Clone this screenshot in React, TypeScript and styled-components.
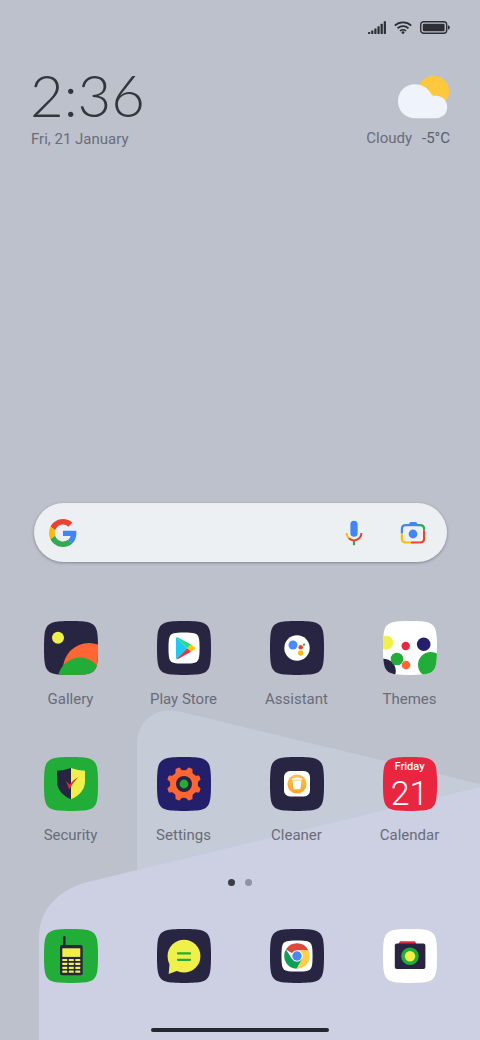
import React, { ReactNode } from "react";
import styled, { createGlobalStyle } from "styled-components";

const GlobalStyle = createGlobalStyle`
  * { box-sizing: border-box; }
  body {
    margin: 0;
    background: #bdc1cc;
    font-family: Roboto, "Liberation Sans", sans-serif;
  }
`;

const Screen = styled.main`
  position: relative;
  display: flex;
  flex-direction: column;
  min-height: 100vh;
  overflow: hidden;
  color: #696c78;
`;

const Wallpaper = styled.svg`
  position: absolute;
  inset: 0;
  z-index: -1;
  width: 100%;
  height: 100%;
`;

const StatusBar = styled.div`
  display: flex;
  justify-content: flex-end;
  align-items: center;
  gap: 8px;
  padding: 21px 30px 0;
`;

const Header = styled.header`
  display: flex;
  justify-content: space-between;
  padding: 36px 30px 0 31px;
`;

const ClockBlock = styled.div`
  display: flex;
  flex-direction: column;
  gap: 10px;
`;

const Clock = styled.time`
  margin-left: -1px;
  font: 300 58px/49px Lato, sans-serif;
  color: #33363c;
`;

const Caption = styled.span<{ $dark?: boolean }>`
  font-size: 15px;
  line-height: 20px;
  white-space: nowrap;
  color: ${(p) => (p.$dark ? "#5a5d69" : "inherit")};
`;

const Weather = styled.div`
  display: flex;
  flex-direction: column;
  align-items: flex-end;
  gap: 9px;
  padding-top: 6px;
`;

const WeatherText = styled.div`
  display: flex;
  align-items: baseline;
  gap: 10px;
`;

const Spacer = styled.div`
  flex: 1;
  min-height: 40px;
`;

const SearchBar = styled.form`
  display: flex;
  align-items: center;
  height: 59px;
  margin: 0 33px 59px 34px;
  padding: 0 21px 0 15px;
  border-radius: 30px;
  background: #edf0f2;
  box-shadow: 0 1px 3px rgba(70, 74, 90, 0.5);
`;

const SearchInput = styled.input`
  flex: 1;
  min-width: 0;
  height: 40px;
  margin: 0 12px;
  border: 0;
  outline: 0;
  background: transparent;
  font: 16px Roboto, sans-serif;
`;

const IconButton = styled.button`
  display: flex;
  padding: 0;
  border: 0;
  background: none;
  cursor: pointer;
`;

const SearchActions = styled.div`
  display: flex;
  align-items: center;
  gap: 37px;
`;

const AppGrid = styled.div`
  display: grid;
  grid-template-columns: repeat(4, 1fr);
  row-gap: 48px;
  padding: 0 14px;
`;

const AppButton = styled.button`
  display: flex;
  flex-direction: column;
  align-items: center;
  gap: 14px;
  padding: 0;
  border: 0;
  background: none;
  font-family: inherit;
  color: inherit;
  cursor: pointer;
`;

const Tile = styled.span`
  display: grid;
  width: 54px;
  height: 54px;
  > * { grid-area: 1 / 1; }
`;

const CalendarFace = styled.span`
  display: flex;
  flex-direction: column;
  align-items: center;
  padding-top: 3px;
  color: #fff;
`;

const Weekday = styled.span`
  font-size: 11px;
  font-weight: 500;
  line-height: 13px;
`;

const MonthDay = styled.span`
  font-size: 34px;
  font-weight: 300;
  line-height: 40px;
`;

const Pager = styled.nav`
  display: flex;
  justify-content: center;
  gap: 10px;
  margin: 34px 0 43px;
`;

const PageDot = styled.button<{ $active?: boolean }>`
  width: 7px;
  height: 7px;
  padding: 0;
  border: 0;
  border-radius: 50%;
  background: ${(p) => (p.$active ? "#3b3c46" : "#8f92a4")};
`;

const HomeIndicator = styled.div`
  width: 37%;
  height: 4px;
  margin: 45px auto 8px;
  border-radius: 2px;
  background: #25272f;
`;

const SQUIRCLE =
  "M27 0C36 0 41 .3 45 1.4C49.3 2.7 51.4 5 52.6 9C53.7 13 54 18 54 27C54 36 53.7 41 52.6 45C51.4 49 49.3 51.3 45 52.6C41 53.7 36 54 27 54C18 54 13 53.7 9 52.6C4.7 51.3 2.6 49 1.4 45C.3 41 0 36 0 27C0 18 .3 13 1.4 9C2.6 5 4.7 2.7 9 1.4C13 .3 18 0 27 0Z";

const INK = "#282542";
const GREEN = "#22ac38";
const YELLOW = "#f0f04a";
const ORANGE = "#ff6634";
const NAVY = "#241f6b";
const RED = "#e8263f";

function AppIcon({ id, fill, children }: { id: string; fill: string; children?: ReactNode }) {
  return (
    <svg width="54" height="54" viewBox="0 0 54 54" aria-hidden="true">
      <clipPath id={id}>
        <path d={SQUIRCLE} />
      </clipPath>
      <path d={SQUIRCLE} fill={fill} />
      <g clipPath={`url(#${id})`}>{children}</g>
    </svg>
  );
}

const Plate = () => (
  <path d={SQUIRCLE} fill="#fff" transform="translate(11.5 11.5) scale(.575)" />
);

const Gallery = () => (
  <AppIcon id="gallery" fill={INK}>
    <circle cx="14" cy="16.7" r="6" fill={YELLOW} />
    <circle cx="45" cy="48" r="26" fill={ORANGE} />
    <circle cx="36" cy="58.5" r="22" fill={GREEN} />
  </AppIcon>
);

const PlayStore = () => (
  <AppIcon id="play" fill={INK}>
    <Plate />
    <path d="M19.6 16.3Q19 16.6 19 17.5V36.8Q19 37.8 19.6 38L30.2 27.2Z" fill="#1fc8f5" />
    <path d="M19.6 16.3Q20 15.9 21 16.4L34 23.6L30.2 27.2Z" fill="#21dd84" />
    <path d="M34 23.6L37.6 25.9Q39 27 37.6 28.2L34 30.7L30.2 27.2Z" fill="#fdc50b" />
    <path d="M19.6 38Q20 38.4 21 37.9L34 30.7L30.2 27.2Z" fill="#e8334a" />
  </AppIcon>
);

const Assistant = () => (
  <AppIcon id="assistant" fill={INK}>
    <circle cx="27" cy="27" r="12.7" fill="#fff" />
    <circle cx="23" cy="24" r="4.5" fill="#4a8cf6" />
    <circle cx="30.7" cy="26.3" r="2.3" fill="#ea4335" />
    <circle cx="30.7" cy="32" r="2.7" fill="#fbb90c" />
    <circle cx="34" cy="23.6" r="1.2" fill="#34a853" />
  </AppIcon>
);

const Themes = () => (
  <AppIcon id="themes" fill="#fff">
    <circle cx="3.3" cy="21.7" r="7" fill={YELLOW} />
    <circle cx="22.7" cy="25" r="4.2" fill={RED} />
    <circle cx="40.7" cy="23.2" r="6.8" fill={NAVY} />
    <circle cx=".5" cy="50" r="12.3" fill={INK} />
    <circle cx="14" cy="38" r="6.3" fill={GREEN} />
    <circle cx="23" cy="44" r="4.3" fill={ORANGE} />
    <circle cx="47.8" cy="43.8" r="12.8" fill={GREEN} />
  </AppIcon>
);

const Security = () => (
  <AppIcon id="security" fill={GREEN}>
    <path d="M27 11Q20 13.5 13 13.8V24Q13 36 27 42.3Z" fill={INK} />
    <path d="M27 11Q34 13.5 41 13.8V24Q41 36 27 42.3Z" fill={YELLOW} />
    <path d="M21.8 23.5L25.4 27.6Q29 22.8 34.5 20Q28.6 25.5 25.3 32.6Z" fill={RED} />
  </AppIcon>
);

const TEETH = [22.5, 67.5, 112.5, 157.5, 202.5, 247.5, 292.5, 337.5];

const Settings = () => (
  <AppIcon id="settings" fill={NAVY}>
    <circle cx="27" cy="27" r="13.8" fill={ORANGE} />
    {TEETH.map((angle) => (
      <path
        key={angle}
        d="M20.8 15.5Q24.3 13.6 24.5 10.9Q24.6 9.8 25.6 9.8H28.4Q29.4 9.8 29.5 10.9Q29.7 13.6 33.2 15.5Z"
        fill={ORANGE}
        transform={`rotate(${angle} 27 27)`}
      />
    ))}
    <circle cx="27" cy="27" r="8" fill={INK} />
    <circle cx="27" cy="27" r="4.4" fill={GREEN} />
  </AppIcon>
);

const Cleaner = () => (
  <AppIcon id="cleaner" fill={INK}>
    <linearGradient id="amber" x1="0" y1="0" x2="0" y2="1">
      <stop offset="0" stopColor="#fbc052" />
      <stop offset="1" stopColor="#fba32f" />
    </linearGradient>
    <rect x="14" y="14" width="26" height="25.6" rx="6" fill="#fff" />
    <circle cx="27" cy="27" r="9.6" fill="url(#amber)" />
    <path d="M21.8 22Q22 21.3 24.4 21.2L25 20.6H29L29.6 21.2Q32 21.3 32.2 22V22.8H21.8Z" fill="#fff" />
    <path d="M22.6 23.6H31.4L30.6 31.2Q30.5 32.3 29.5 32.3H24.5Q23.5 32.3 23.4 31.2Z" fill="#fff" />
  </AppIcon>
);

const Calendar = () => (
  <>
    <AppIcon id="calendar" fill={RED} />
    <CalendarFace>
      <Weekday>Friday</Weekday>
      <MonthDay>21</MonthDay>
    </CalendarFace>
  </>
);

const Phone = () => (
  <AppIcon id="phone" fill={GREEN}>
    <rect x="19" y="7" width="2.6" height="14" rx="1.3" fill={INK} />
    <rect x="16" y="16" width="22.7" height="30.2" rx="2" fill={INK} />
    <rect x="18.3" y="19.3" width="18" height="8.6" fill={YELLOW} />
    {[29.9, 33.8, 37.7, 41.6].map((y) =>
      [18.3, 24.8, 31.3].map((x) => (
        <rect key={`${x}-${y}`} x={x} y={y} width="5" height="2.2" rx=".4" fill={YELLOW} />
      ))
    )}
  </AppIcon>
);

const Messages = () => (
  <AppIcon id="messages" fill={INK}>
    <circle cx="27" cy="27.2" r="16.4" fill={YELLOW} />
    <path d="M12.6 34L11.7 45L21 41.5Z" fill={YELLOW} />
    <path d="M21 24.4H33M21 30.8H33" stroke={GREEN} strokeWidth="2.2" strokeLinecap="round" />
  </AppIcon>
);

const Chrome = () => (
  <AppIcon id="chrome" fill={INK}>
    <Plate />
    <path d="M27 27L15.9 20.6A12.8 12.8 0 0 1 38.4 21.2H27Z" fill="#dc4a3d" />
    <path d="M38.4 21.2A12.8 12.8 0 0 1 26.5 39.8L32 29.9L27 21.2Z" fill="#fdcf45" />
    <path d="M15.9 20.6A12.8 12.8 0 0 0 26.5 39.8L32 29.9L22 29.9Z" fill="#109d58" />
    <circle cx="27" cy="27" r="5.8" fill="#fff" />
    <circle cx="27" cy="27" r="4.7" fill="#4688f4" />
  </AppIcon>
);

const Camera = () => (
  <AppIcon id="camera" fill="#fff">
    <path d="M17 12.2H32L33.6 15.5H15.2Z" fill={RED} />
    <rect x="11.8" y="14.6" width="30.6" height="25.4" rx="2" fill={INK} />
    <circle cx="27" cy="27.3" r="8.8" fill={GREEN} />
    <circle cx="27" cy="27.3" r="5.2" fill={YELLOW} />
  </AppIcon>
);

const APPS: { name: string; icon: ReactNode }[] = [
  { name: "Gallery", icon: <Gallery /> },
  { name: "Play Store", icon: <PlayStore /> },
  { name: "Assistant", icon: <Assistant /> },
  { name: "Themes", icon: <Themes /> },
  { name: "Security", icon: <Security /> },
  { name: "Settings", icon: <Settings /> },
  { name: "Cleaner", icon: <Cleaner /> },
  { name: "Calendar", icon: <Calendar /> },
];

const DOCK: { name: string; icon: ReactNode }[] = [
  { name: "Phone", icon: <Phone /> },
  { name: "Messages", icon: <Messages /> },
  { name: "Chrome", icon: <Chrome /> },
  { name: "Camera", icon: <Camera /> },
];

const STATUS_INK = "#2b2e34";

const SignalIcon = () => (
  <svg width="18" height="13" viewBox="0 0 18 13" aria-hidden="true">
    {[2, 3.6, 5.6, 7.8, 10.2, 12.8].map((h, i) => (
      <rect key={h} x={i * 3.15} y={13 - h} width="2.2" height={h} rx=".4" fill={STATUS_INK} />
    ))}
  </svg>
);

const WifiIcon = () => (
  <svg width="18" height="13" viewBox="0 0 18 13" fill="none" stroke={STATUS_INK} aria-hidden="true">
    <path d="M.8 4.6A12 12 0 0 1 17.2 4.6" strokeWidth="1.9" />
    <path d="M3.5 7.4A8 8 0 0 1 14.5 7.4" strokeWidth="1.8" />
    <path d="M6 10A4.4 4.4 0 0 1 12 10" strokeWidth="1.7" />
    <circle cx="9" cy="11.6" r="1.4" fill={STATUS_INK} stroke="none" />
  </svg>
);

const BatteryIcon = () => (
  <svg width="30" height="13" viewBox="0 0 30 13" aria-hidden="true">
    <rect x=".7" y=".7" width="26" height="11.6" rx="3" fill="none" stroke={STATUS_INK} strokeWidth="1.4" />
    <rect x="2.8" y="2.8" width="21.8" height="7.4" rx="1.2" fill={STATUS_INK} />
    <path d="M28 4.4H28.6Q29.8 4.8 29.8 6.5T28.6 8.6H28Z" fill={STATUS_INK} />
  </svg>
);

const WeatherIcon = () => (
  <svg width="52" height="43" viewBox="0 0 52 43" aria-hidden="true">
    <circle cx="35.6" cy="15.4" r="15.6" fill="#fdc83b" />
    <path
      d="M17 8.2C25 8.2 30.5 12.5 33.6 18.6Q34.6 20.2 37 19.8C44 19.2 49.2 24.5 49.2 31C49.2 37.5 44.4 42.2 38 42.2H17.5C7.5 42.2 0 35 0 25.2C0 15.5 7.5 8.2 17 8.2Z"
      fill="#eff4fc"
    />
  </svg>
);

const GoogleIcon = () => (
  <svg width="28" height="28" viewBox="0 0 48 48" aria-hidden="true">
    <path fill="#EA4335" d="M24 9.5c3.54 0 6.71 1.22 9.21 3.6l6.85-6.85C35.9 2.38 30.47 0 24 0 14.62 0 6.51 5.38 2.56 13.22l7.98 6.19C12.43 13.72 17.74 9.5 24 9.5z" />
    <path fill="#4285F4" d="M46.98 24.55c0-1.57-.15-3.09-.38-4.55H24v9.02h12.94c-.58 2.96-2.26 5.48-4.78 7.18l7.73 6c4.51-4.18 7.09-10.36 7.09-17.65z" />
    <path fill="#FBBC05" d="M10.53 28.59c-.48-1.45-.76-2.99-.76-4.59s.27-3.14.76-4.59l-7.98-6.19C.92 16.46 0 20.12 0 24c0 3.88.92 7.54 2.56 10.78l7.97-6.19z" />
    <path fill="#34A853" d="M24 48c6.48 0 11.93-2.13 15.89-5.81l-7.73-6c-2.15 1.45-4.92 2.3-8.16 2.3-6.26 0-11.57-4.22-13.47-9.91l-7.98 6.19C6.51 42.62 14.62 48 24 48z" />
  </svg>
);

const MicIcon = () => (
  <svg width="18" height="26" viewBox="0 0 18 26" fill="none" aria-hidden="true">
    <rect x="5.4" y="0.8" width="7.2" height="16" rx="3.6" fill="#4285f4" />
    <path d="M1.6 13A7.4 7.4 0 0 0 4 18.5" stroke="#fbbc05" strokeWidth="2" />
    <path d="M3.8 18.3A7.5 7.5 0 0 0 16.4 13" stroke="#ea4335" strokeWidth="2" />
    <path d="M9 21V25.2" stroke="#34a853" strokeWidth="2.2" />
  </svg>
);

const LensIcon = () => (
  <svg width="26" height="24" viewBox="0 0 26 24" fill="none" aria-hidden="true">
    <path d="M1.9 12.5V8.2Q1.9 4.2 5.9 4.2H19" stroke="#4285f4" strokeWidth="2.2" />
    <path d="M8 4.4L9.6 1.8Q10.1 1 11 1H15.4Q16.3 1 16.8 1.8L18.4 4.4Z" fill="#4285f4" />
    <path d="M18.4 4.2H20.1Q24.1 4.2 24.1 8.2V9.6" stroke="#34a853" strokeWidth="2.2" />
    <path d="M24.1 9.4V17.5Q24.1 21.5 20.1 21.5H11" stroke="#ea4335" strokeWidth="2.2" />
    <path d="M11 21.5H5.9Q1.9 21.5 1.9 17.5V12.4" stroke="#fbbc05" strokeWidth="2.2" />
    <circle cx="13" cy="13" r="4.4" fill="#4285f4" />
  </svg>
);

export default function App() {
  return (
    <>
      <GlobalStyle />
      <Screen>
        <Wallpaper viewBox="0 0 480 1040" preserveAspectRatio="none" aria-hidden="true">
          <rect width="480" height="1040" fill="#bdc1cc" />
          <path d="M137 1040V745C137 724 151 710.5 169 710.5C176 710.5 182 712 188 713.5L480 784V1040Z" fill="#c5cbd7" />
          <path d="M39 1040V937C39 910 58 889 90 881.5L480 787V1040Z" fill="#cdcfe3" />
        </Wallpaper>

        <StatusBar>
          <SignalIcon />
          <WifiIcon />
          <BatteryIcon />
        </StatusBar>

        <Header>
          <ClockBlock>
            <Clock>2:36</Clock>
            <Caption>Fri, 21 January</Caption>
          </ClockBlock>
          <Weather>
            <WeatherIcon />
            <WeatherText>
              <Caption>Cloudy</Caption>
              <Caption $dark>-5°C</Caption>
            </WeatherText>
          </Weather>
        </Header>

        <Spacer />

        <SearchBar role="search" onSubmit={(e) => e.preventDefault()}>
          <GoogleIcon />
          <SearchInput type="text" aria-label="Search" />
          <SearchActions>
            <IconButton type="button" aria-label="Voice search"><MicIcon /></IconButton>
            <IconButton type="button" aria-label="Lens"><LensIcon /></IconButton>
          </SearchActions>
        </SearchBar>

        <AppGrid>
          {APPS.map((app) => (
            <AppButton key={app.name} type="button">
              <Tile>{app.icon}</Tile>
              <Caption>{app.name}</Caption>
            </AppButton>
          ))}
        </AppGrid>

        <Pager aria-label="Home screens">
          <PageDot type="button" aria-label="Page 1" $active />
          <PageDot type="button" aria-label="Page 2" />
        </Pager>

        <AppGrid>
          {DOCK.map((app) => (
            <AppButton key={app.name} type="button" aria-label={app.name}>
              <Tile>{app.icon}</Tile>
            </AppButton>
          ))}
        </AppGrid>

        <HomeIndicator />
      </Screen>
    </>
  );
}
